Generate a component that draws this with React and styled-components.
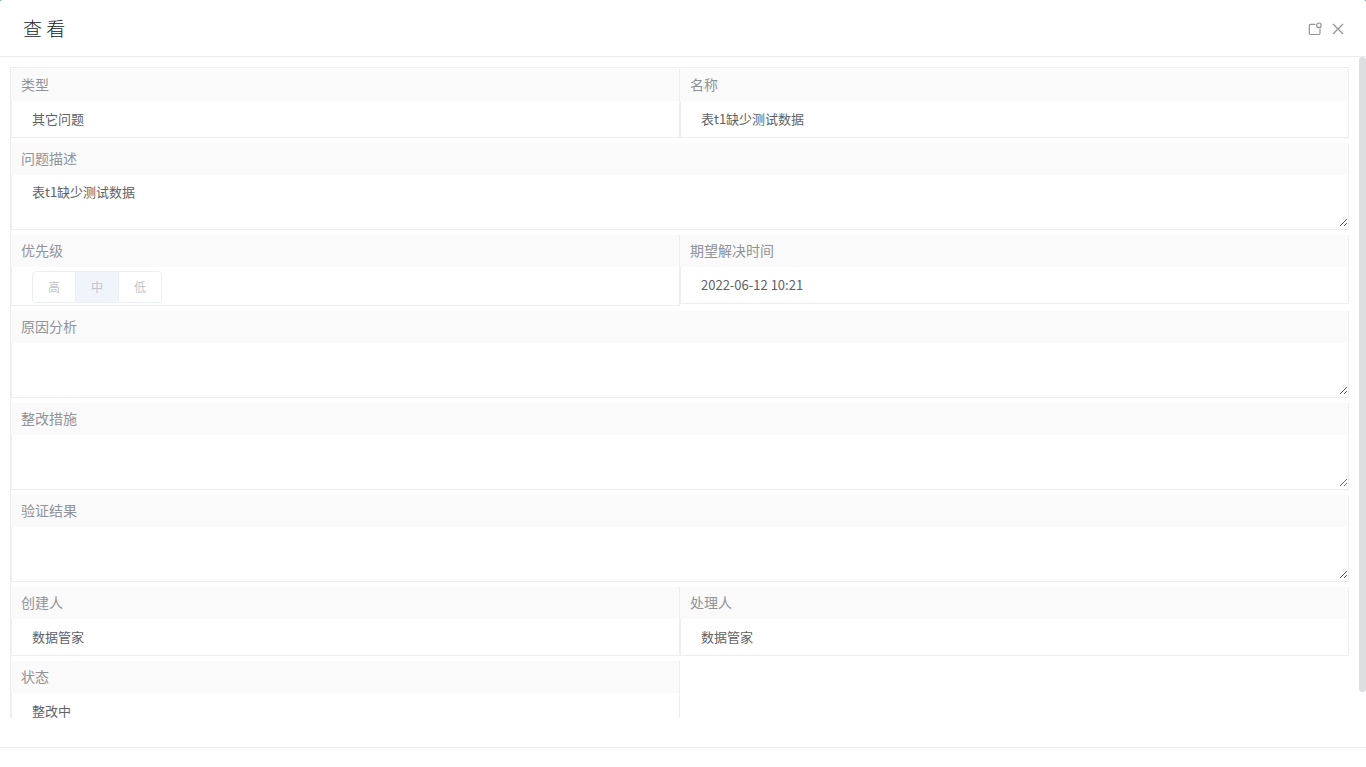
import styled, { createGlobalStyle, css } from 'styled-components';

const line = '#ebeef5';

export default function App() {
  return (
    <>
      <GlobalStyle />
      <Dialog role="dialog" aria-labelledby="dialog-title">
        <Header>
          <Title id="dialog-title">查 看</Title>
          <Actions>
            <IconButton type="button" aria-label="全屏">
              <svg width="14" height="14" viewBox="0 0 14 14">
                <path d="M7.5 2.4H2.5Q1.3 2.4 1.3 3.6V11.3Q1.3 12.5 2.5 12.5H10.8Q12 12.5 12 11.3V6.5" />
                <circle cx="10.9" cy="3.3" r="2.3" />
              </svg>
            </IconButton>
            <IconButton type="button" aria-label="关闭">
              <svg width="14" height="14" viewBox="0 0 14 14">
                <path d="M2 2L12 12M12 2L2 12" />
              </svg>
            </IconButton>
          </Actions>
        </Header>
        <Body>
          <Form>
            <TextField id="type" label="类型" value="其它问题" />
            <TextField id="name" label="名称" value="表t1缺少测试数据" />
            <AreaField id="desc" label="问题描述" value="表t1缺少测试数据" />
            <Cell role="radiogroup" aria-labelledby="priority">
              <Label as="span" id="priority">优先级</Label>
              <RadioBox>
                <RadioGroup>
                  {['高', '中', '低'].map((item) => (
                    <RadioButton key={item} $active={item === '中'}>
                      <input type="radio" name="priority" value={item} defaultChecked={item === '中'} disabled />
                      {item}
                    </RadioButton>
                  ))}
                </RadioGroup>
              </RadioBox>
            </Cell>
            <TextField id="time" label="期望解决时间" value="2022-06-12 10:21" />
            <AreaField id="reason" label="原因分析" />
            <AreaField id="measure" label="整改措施" />
            <AreaField id="result" label="验证结果" />
            <TextField id="creator" label="创建人" value="数据管家" />
            <TextField id="handler" label="处理人" value="数据管家" />
            <TextField id="status" label="状态" value="整改中" />
          </Form>
          <ScrollThumb />
        </Body>
        <Footer />
      </Dialog>
    </>
  );
}

function TextField({ id, label, value }) {
  return (
    <Cell>
      <Label htmlFor={id}>{label}</Label>
      <Input id={id} defaultValue={value} readOnly />
    </Cell>
  );
}

function AreaField({ id, label, value }) {
  return (
    <Cell $full>
      <Label htmlFor={id}>{label}</Label>
      <AreaBox>
        <TextArea id={id} defaultValue={value} readOnly />
      </AreaBox>
    </Cell>
  );
}

const GlobalStyle = createGlobalStyle`
  * {
    box-sizing: border-box;
  }
  body {
    margin: 0;
    background: #4a86b4;
    color: #606266;
  }
  body, button, input, textarea {
    font-family: "Noto Sans CJK SC", sans-serif;
  }
`;

const Dialog = styled.div`
  display: flex;
  flex-direction: column;
  height: 100vh;
  background: #fff;
  border-radius: 2px 2px 0 0;
  overflow: hidden;
`;

const Header = styled.header`
  display: flex;
  flex: none;
  align-items: center;
  justify-content: space-between;
  height: 57px;
  padding: 0 21px 0 23px;
  border-bottom: 1px solid #ebeced;
`;

const Title = styled.h1`
  margin: 0;
  font-size: 19px;
  font-weight: 300;
  line-height: 24px;
  color: #202124;
`;

const Actions = styled.div`
  display: flex;
  gap: 9px;
  padding-top: 2px;
`;

const IconButton = styled.button`
  display: flex;
  padding: 0;
  border: 0;
  background: none;
  color: #909399;
  cursor: pointer;

  svg {
    fill: none;
    stroke: currentColor;
    stroke-width: 1.2;
  }
`;

const Body = styled.main`
  position: relative;
  flex: 1;
  min-height: 0;
  margin-bottom: 29px;
  padding: 10px 17px 0 10px;
  overflow: hidden;
`;

const Form = styled.form`
  display: grid;
  grid-template-columns: 1fr 1fr;
  align-items: start;
  row-gap: 5px;
  padding-top: 1px;
  border-top: 1px solid ${line};
  border-left: 1px solid ${line};
`;

const Cell = styled.div`
  min-width: 0;
  border-right: 1px solid ${line};
  ${({ $full }) => $full && css`grid-column: 1 / -1;`}
`;

const Label = styled.label`
  display: block;
  height: 32px;
  padding: 0 10px;
  background: #fafafa;
  color: #909399;
  font-size: 14px;
  line-height: 30px;
`;

const fieldBorder = css`
  border: 0;
  border-left: 1px solid ${line};
  border-bottom: 1px solid ${line};
`;

const fieldText = css`
  display: block;
  width: 100%;
  background: #fff;
  color: #606266;
  font-size: 13px;
  line-height: 20px;
  outline: none;
`;

const Input = styled.input`
  ${fieldText}
  ${fieldBorder}
  height: 37px;
  padding: 0 20px 2px;
`;

const AreaBox = styled.div`
  ${fieldBorder}
  padding-bottom: 2px;
`;

const TextArea = styled.textarea`
  ${fieldText}
  height: 52px;
  padding: 7px 20px;
  border: 0;
  resize: vertical;
`;

const RadioBox = styled.div`
  ${fieldBorder}
  padding: 4px 20px 2px;
`;

const RadioGroup = styled.div`
  display: flex;
  width: fit-content;
  height: 32px;
  border: 1px solid ${line};
  border-radius: 4px;
  overflow: hidden;
`;

const RadioButton = styled.label`
  padding: 0 15px;
  background: ${({ $active }) => ($active ? '#f0f5fc' : '#fff')};
  color: #c0c4cc;
  font-size: 12px;
  line-height: 30px;

  & + & {
    border-left: 1px solid ${line};
  }
  input {
    position: absolute;
    opacity: 0;
    pointer-events: none;
  }
`;

/* sits over the right edge of the scroll area */
const ScrollThumb = styled.div`
  position: absolute;
  top: 0;
  right: 0;
  width: 7px;
  height: 96%;
  border-radius: 4px;
  background: #dddee0;
`;

const Footer = styled.footer`
  flex: none;
  height: 20px;
  border-top: 1px solid #ebeced;
`;
